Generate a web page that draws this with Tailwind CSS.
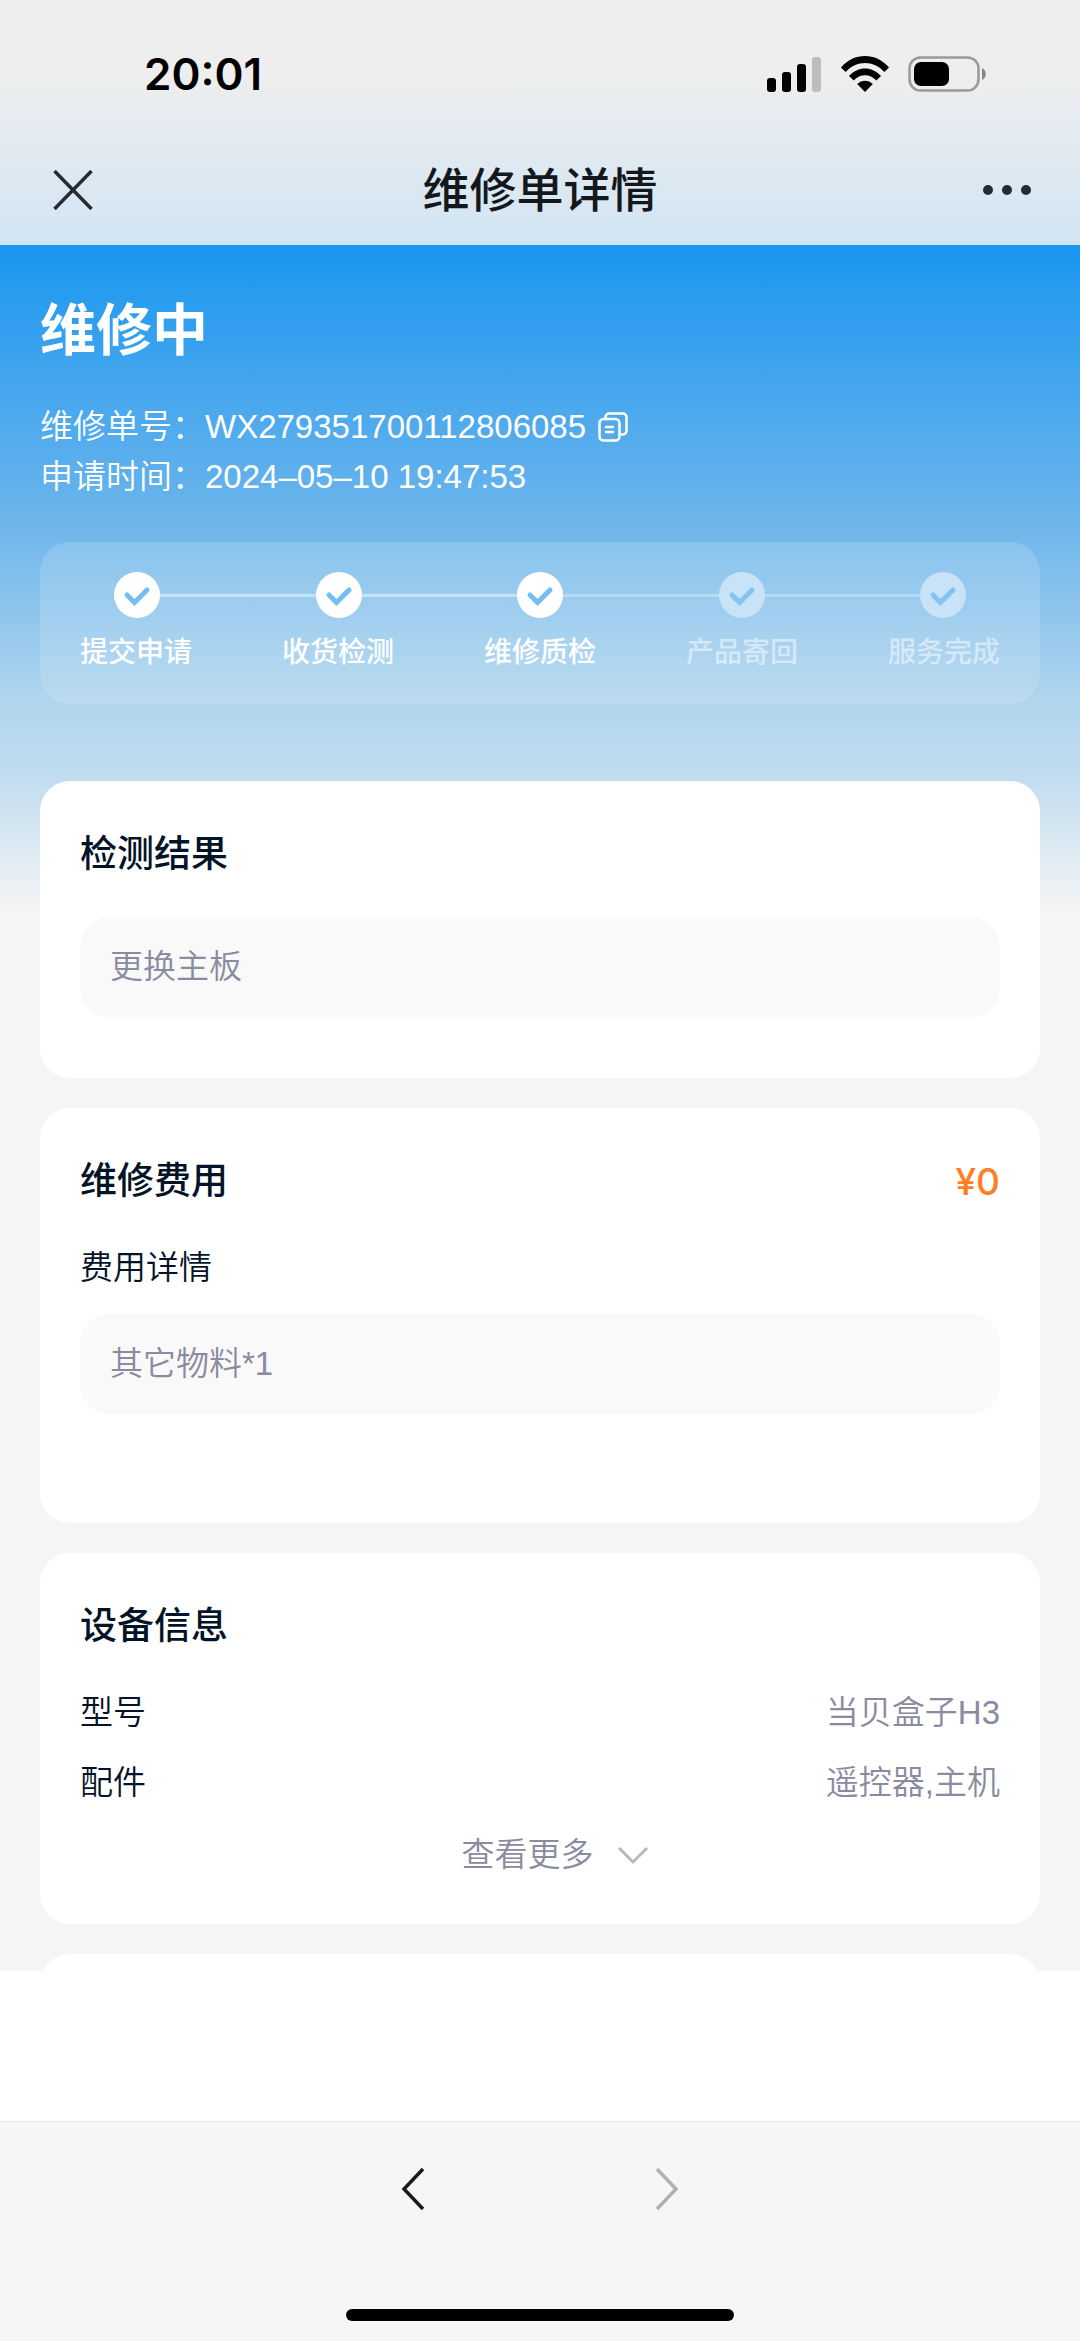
<!DOCTYPE html>
<html lang="zh-CN">
<head>
    <meta charset="UTF-8">
    <meta name="viewport" content="width=device-width, initial-scale=1.0">
    <title>维修单详情</title>
    <script src="https://cdn.jsdelivr.net/npm/@tailwindcss/browser@4"></script>
    <style>
        body {
            font-family: 'Liberation Sans', 'Noto Sans CJK SC', sans-serif;
        }
    </style>
</head>
<body class="bg-white min-h-screen flex flex-col text-[33px] leading-[52px] font-[350] text-[#041428]">

    <header class="bg-linear-to-b from-[#eeeeee] from-30% to-[#d1e5f4]">
        <!-- status bar -->
        <div class="h-[135px] pt-3 pl-[144px] pr-[93px] flex items-center justify-between text-black">
            <span class="font-['Inter'] font-semibold text-[44px]">20:01</span>
            <div class="flex items-center gap-[19px]">
                <svg class="w-[55px] h-9" viewBox="0 0 55 36">
                    <rect x="0" y="22" width="9" height="14" rx="3"/>
                    <rect x="15" y="16" width="9" height="20" rx="3"/>
                    <rect x="30" y="8" width="9" height="28" rx="3"/>
                    <rect x="45" y="1" width="9" height="35" rx="3" fill="#bdbdbd"/>
                </svg>
                <svg class="w-12 h-9" viewBox="0 0 48 36">
                    <path d="M0 11.5C13-3.8 35-3.8 48 11.5L43.4 16C32.500 4 15.500 4 4.600 16Z"/>
                    <path d="M8 20C17 10 31 10 40 20L35.300 24.500C29 17.500 19 17.500 12.700 24.500Z"/>
                    <path d="M16.200 28C20.500 23.500 27.500 23.500 31.800 28L24 36Z"/>
                </svg>
                <svg class="w-[79px] h-9" viewBox="0 0 79 36">
                    <rect x="1.500" y="1.500" width="69" height="33" rx="11" fill="none" stroke="#999" stroke-width="2.500"/>
                    <rect x="6" y="6" width="35" height="24" rx="7"/>
                    <path d="M74 12C79 14 79 22 74 24Z" fill="#888"/>
                </svg>
            </div>
        </div>
        <nav class="h-[110px] px-[46px] flex items-center justify-between">
            <button aria-label="关闭" class="w-[54px] h-[54px] flex items-center justify-center">
                <svg class="w-10 h-10" viewBox="0 0 40 40" fill="none" stroke="#252b30" stroke-width="3.500"><path d="M1.500 1L38.500 39M38.500 1L1.500 39"/></svg>
            </button>
            <h1 class="pt-0.5 text-[47px] font-medium text-[#14181c]">维修单详情</h1>
            <button aria-label="更多" class="w-[54px] h-[54px] flex items-center justify-center">
                <svg class="w-12 h-3" viewBox="0 0 48 12" fill="#252b30"><circle cx="5" cy="6" r="5"/><circle cx="24" cy="6" r="5"/><circle cx="43" cy="6" r="5"/></svg>
            </button>
        </nav>
    </header>

    <main class="bg-[#f5f5f5] bg-[linear-gradient(#1a96f0,#6cb5eb_275px,#b0d5ee_455px,#c2ddf0_535px,#f5f5f5_665px)] px-10">
        <section class="pt-[51px] text-white">
            <h2 class="text-[56px] leading-[70px] font-bold">维修中</h2>
            <div class="mt-9 leading-[50px]">
                <div class="flex items-center">
                    <span>维修单号：WX279351700112806085</span>
                    <button aria-label="复制" class="ml-3">
                        <svg class="w-[30px] h-[30px]" viewBox="0 0 30 30" fill="none" stroke="#fff" stroke-width="2.500" stroke-linecap="round" stroke-linejoin="round">
                            <rect x="1.500" y="7" width="20" height="21.500" rx="4"/>
                            <path d="M7.500 7V5a3.500 3.500 0 0 1 3.500-3.500H25a3.500 3.500 0 0 1 3.500 3.500V19a3.500 3.500 0 0 1-3.500 3.500H21.500M8 15H15M8 20H15"/>
                        </svg>
                    </button>
                </div>
                <p>申请时间：2024–05–10 19:47:53</p>
            </div>

            <!-- progress -->
            <div class="mt-10 h-[162px] rounded-[30px] bg-white/15 pt-[30px]">
                <div class="flex items-center px-[74px]" aria-hidden="true">
                    <svg class="w-[46px] h-[46px]" viewBox="0 0 46 46"><circle cx="23" cy="23" r="23" fill="#fff"/><path d="M13 23L20.500 30.500L33 18" fill="none" stroke="#74bdf5" stroke-width="5" stroke-linecap="round"/></svg>
                    <div class="flex-1 h-[3px] bg-white/45"></div>
                    <svg class="w-[46px] h-[46px]" viewBox="0 0 46 46"><circle cx="23" cy="23" r="23" fill="#fff"/><path d="M13 23L20.500 30.500L33 18" fill="none" stroke="#74bdf5" stroke-width="5" stroke-linecap="round"/></svg>
                    <div class="flex-1 h-[3px] bg-white/45"></div>
                    <svg class="w-[46px] h-[46px]" viewBox="0 0 46 46"><circle cx="23" cy="23" r="23" fill="#fff"/><path d="M13 23L20.500 30.500L33 18" fill="none" stroke="#74bdf5" stroke-width="5" stroke-linecap="round"/></svg>
                    <div class="flex-1 h-[3px] bg-white/30"></div>
                    <svg class="w-[46px] h-[46px]" viewBox="0 0 46 46"><circle cx="23" cy="23" r="23" fill="#c8e3f7"/><path d="M13 23L20.500 30.500L33 18" fill="none" stroke="#84c4f3" stroke-width="5" stroke-linecap="round"/></svg>
                    <div class="flex-1 h-[3px] bg-white/30"></div>
                    <svg class="w-[46px] h-[46px]" viewBox="0 0 46 46"><circle cx="23" cy="23" r="23" fill="#c8e3f7"/><path d="M13 23L20.500 30.500L33 18" fill="none" stroke="#84c4f3" stroke-width="5" stroke-linecap="round"/></svg>
                </div>
                <ol class="mt-[15px] px-10 flex justify-between text-[28px] font-medium leading-10">
                    <li>提交申请</li>
                    <li>收货检测</li>
                    <li>维修质检</li>
                    <li class="text-white/50">产品寄回</li>
                    <li class="text-white/50">服务完成</li>
                </ol>
            </div>
        </section>

        <div class="mt-[77px] flex flex-col gap-[30px]">
            <section class="bg-white rounded-[30px] px-10 pt-12 pb-[61px]">
                <h2 class="text-[37px] font-medium">检测结果</h2>
                <p class="mt-9 px-[30px] py-6 rounded-[30px] bg-[#f9f9f9] text-[#8a8aa0]">更换主板</p>
            </section>

            <section class="bg-white rounded-[30px] px-10 pt-12 pb-[109px]">
                <div class="flex justify-between text-[37px] font-medium">
                    <h2>维修费用</h2>
                    <span class="font-['Inter'] text-[#ff7f24]">¥0</span>
                </div>
                <h3 class="mt-[34px]">费用详情</h3>
                <p class="mt-5 px-[30px] py-6 rounded-[30px] bg-[#f9f9f9] text-[#8a8aa0]">其它物料*1</p>
            </section>

            <section class="bg-white rounded-[30px] px-10 pt-12 pb-[43px]">
                <h2 class="text-[37px] font-medium">设备信息</h2>
                <dl class="mt-[34px] flex flex-col gap-[18px]">
                    <div class="flex justify-between"><dt>型号</dt><dd class="text-[#8a8aa0]">当贝盒子H3</dd></div>
                    <div class="flex justify-between"><dt>配件</dt><dd class="text-[#8a8aa0]">遥控器,主机</dd></div>
                </dl>
                <button class="mt-5 mx-auto pl-[30px] flex items-center gap-[23px] text-[#8a8aa0]">
                    查看更多
                    <svg class="w-8 h-5" viewBox="0 0 32 20" fill="none" stroke="#b9b9bd" stroke-width="3"><path d="M2 3L16 17L30 3"/></svg>
                </button>
            </section>

            <!-- next card, cut off by the bottom of the list -->
            <div class="h-[17px] overflow-hidden">
                <div class="h-20 bg-white rounded-[30px]"></div>
            </div>
        </div>
    </main>

    <div class="flex-1"></div>

    <footer class="h-[220px] bg-[#f6f6f6] border-t border-[#e4e4e4] pb-5 flex flex-col items-center justify-between">
        <div class="pt-10 flex gap-[200px]">
            <button aria-label="后退" class="w-[54px] h-[54px] flex items-center justify-center">
                <svg class="w-6 h-[42px]" viewBox="0 0 24 42" fill="none" stroke="#1a1a1a" stroke-width="3.500"><path d="M22 1L3 21L22 41"/></svg>
            </button>
            <button aria-label="前进" disabled class="w-[54px] h-[54px] flex items-center justify-center">
                <svg class="w-6 h-[42px]" viewBox="0 0 24 42" fill="none" stroke="#b0b0b0" stroke-width="3.500"><path d="M2 1L21 21L2 41"/></svg>
            </button>
        </div>
        <div class="w-[36%] h-3 rounded-full bg-black"></div>
    </footer>

</body>
</html>
